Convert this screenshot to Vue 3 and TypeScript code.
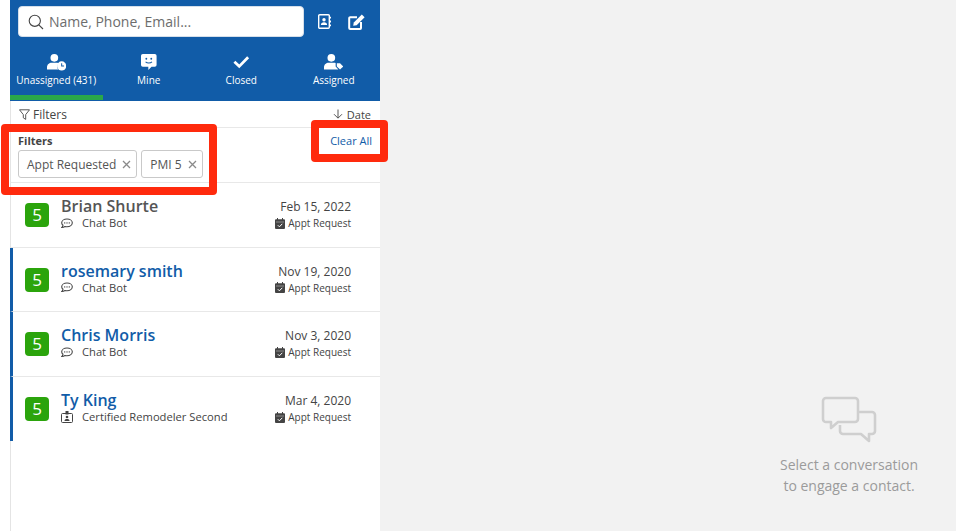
<script setup lang="ts">
interface Contact {
  name: string;
  source: string;
  icon: 'chat' | 'badge';
  date: string;
  unread: boolean;
}

const tabs = [
  { key: 'unassigned', label: 'Unassigned (431)' },
  { key: 'mine', label: 'Mine' },
  { key: 'closed', label: 'Closed' },
  { key: 'assigned', label: 'Assigned' },
];

const contacts: Contact[] = [
  { name: 'Brian Shurte', source: 'Chat Bot', icon: 'chat', date: 'Feb 15, 2022', unread: false },
  { name: 'rosemary smith', source: 'Chat Bot', icon: 'chat', date: 'Nov 19, 2020', unread: true },
  { name: 'Chris Morris', source: 'Chat Bot', icon: 'chat', date: 'Nov 3, 2020', unread: true },
  { name: 'Ty King', source: 'Certified Remodeler Second', icon: 'badge', date: 'Mar 4, 2020', unread: true },
];

const chips = ['Appt Requested', 'PMI 5'];
</script>

<template>
  <div class="page">
    <aside class="sidebar">
      <header class="head">
        <div class="search-row">
          <div class="search">
            <svg class="search__icon" width="16" height="16" viewBox="0 0 16 16" fill="none" stroke="#444" stroke-width="1.1">
              <circle cx="6.800" cy="6.800" r="5.600" />
              <path d="M10.800 10.800 15 15" />
            </svg>
            <span class="search__text">Name, Phone, Email...</span>
          </div>
          <svg class="head-icon" width="13" height="15" viewBox="0 0 13 15">
            <path fill="none" stroke="#fff" stroke-width="1.400" d="M1.700.800h8.600a1 1 0 0 1 1 1v11.400a1 1 0 0 1-1 1H1.700a1 1 0 0 1-1-1V1.800a1 1 0 0 1 1-1z" />
            <path fill="#fff" d="M11.500 2.800H13v1.800h-1.500zM11.500 6.600H13v1.800h-1.500zM11.500 10.400H13v1.800h-1.500z" />
            <circle fill="#fff" cx="6" cy="5.800" r="1.700" />
            <path fill="#fff" d="M2.900 11c0-2 1.300-2.800 3.100-2.800s3.100.8 3.100 2.800z" />
          </svg>
          <svg class="head-icon" width="17" height="16" viewBox="0 0 17 16">
            <path fill="none" stroke="#fff" stroke-width="2" d="M9 3.200H2.200a1 1 0 0 0-1 1V14a1 1 0 0 0 1 1H12a1 1 0 0 0 1-1V8" />
            <path fill="#fff" d="M13.800.4 16.600 3.200 8.600 11.200l-3.400.6.600-3.400z" />
          </svg>
        </div>
        <nav class="tabs">
          <div v-for="(tab, i) in tabs" :key="tab.key" class="tab" :class="{ 'tab--active': i === 0 }">
            <svg v-if="tab.key === 'unassigned'" viewBox="0 0 21 18">
              <circle fill="#fff" cx="8" cy="4.200" r="4.200" />
              <path fill="#fff" d="M0 17v-2.500C0 11.500 2.500 9.600 5 9.600h6c.8 0 1.500.2 2 .5a5.500 5.500 0 0 0-.800 6.900z" />
              <circle fill="#fff" cx="16" cy="13" r="5" />
              <path fill="none" stroke="#115ca8" stroke-width="1.100" d="M16 10v3.200h2.600" />
            </svg>
            <svg v-else-if="tab.key === 'mine'" viewBox="0 0 17 18">
              <path fill="#fff" d="M2 0h13a2 2 0 0 1 2 2v10a2 2 0 0 1-2 2h-3.500L8 17.500V14H2a2 2 0 0 1-2-2V2a2 2 0 0 1 2-2z" />
              <circle fill="#115ca8" cx="5.800" cy="5.200" r="1" />
              <circle fill="#115ca8" cx="11.200" cy="5.200" r="1" />
              <path fill="none" stroke="#115ca8" stroke-width="1.100" d="M5 8.500c1.800 1.700 5.200 1.700 7 0" />
            </svg>
            <svg v-else-if="tab.key === 'closed'" viewBox="0 0 18 18">
              <path fill="none" stroke="#fff" stroke-width="3" d="M1.500 8.500 6.800 13.500 16.500 3.500" />
            </svg>
            <svg v-else viewBox="0 0 21 18">
              <circle fill="#fff" cx="8" cy="4.200" r="4.200" />
              <path fill="#fff" d="M0 17v-2.500C0 11.500 2.500 9.600 5 9.600h6c.6 0 1.200.1 1.700.3v3.700l3 3.400z" />
              <path fill="#fff" d="M14 10h3.500l3.500 3.500-3.500 3.500-3.500-3.500z" />
            </svg>
            <span class="tab__label">{{ tab.label }}</span>
          </div>
        </nav>
      </header>

      <div class="toolbar">
        <span class="toolbar__filters">
          <svg width="11" height="11" viewBox="0 0 11 11" fill="none" stroke="#444" stroke-width=".9">
            <path d="M.5.800h10L6.700 5.600v4.800L4.300 8.800V5.600z" />
          </svg>
          Filters
        </span>
        <span class="toolbar__sort">
          <svg width="10" height="10" viewBox="0 0 10 10" fill="none" stroke="#444" stroke-width=".9">
            <path d="M5 .5v8.500M1 5.200 5 9.200 9 5.200" />
          </svg>
          Date
        </span>
      </div>

      <section class="filters">
        <div class="filters__main">
          <div class="filters__title">Filters</div>
          <div class="chips">
            <span v-for="chip in chips" :key="chip" class="chip">
              {{ chip }}
              <svg width="9" height="9" viewBox="0 0 9 9" stroke="#8a8a8a" stroke-width="1.300">
                <path d="M1 1 8 8M8 1 1 8" />
              </svg>
            </span>
          </div>
        </div>
        <a class="filters__clear">Clear All</a>
        <div class="mark mark--filters"></div>
        <div class="mark mark--clear"></div>
      </section>

      <ul class="list">
        <li v-for="c in contacts" :key="c.name" class="row" :class="{ 'row--unread': c.unread }">
          <div class="score">5</div>
          <div class="row__main">
            <div class="row__name">{{ c.name }}</div>
            <div class="row__source">
              <svg v-if="c.icon === 'chat'" width="12" height="11" viewBox="0 0 12 11">
                <path fill="none" stroke="#444" stroke-width="1.100" d="M6 1c-3 0-5.300 1.700-5.300 3.800 0 1 .5 1.900 1.300 2.500-.1.900-.6 1.700-1.100 2.200 1.200 0 2.400-.5 3.100-1 .6.100 1.300.2 2 .2 3 0 5.300-1.800 5.300-3.900S9 1 6 1z" />
                <circle fill="#444" cx="3.700" cy="4.900" r=".7" />
                <circle fill="#444" cx="6" cy="4.900" r=".7" />
                <circle fill="#444" cx="8.300" cy="4.900" r=".7" />
              </svg>
              <svg v-else width="12" height="12" viewBox="0 0 12 12">
                <rect fill="none" stroke="#444" stroke-width="1" x=".5" y="2.500" width="11" height="9" rx="1" />
                <rect fill="#444" x="4.500" y="0" width="3" height="3.500" />
                <circle fill="#444" cx="6" cy="6" r="1.300" />
                <path fill="#444" d="M3.500 10c0-1.500 1-2 2.500-2s2.500.5 2.500 2z" />
              </svg>
              <span>{{ c.source }}</span>
            </div>
          </div>
          <div class="row__side">
            <div class="row__date">{{ c.date }}</div>
            <div class="row__type">
              <svg width="10" height="11" viewBox="0 0 10 11">
                <path fill="#444" d="M2 0h1v1.200h4V0h1v1.200h1a1 1 0 0 1 1 1V10a1 1 0 0 1-1 1H1a1 1 0 0 1-1-1V2.200a1 1 0 0 1 1-1h1z" />
                <path fill="#fff" d="M1 3.800h8v.4H1z" />
                <path fill="none" stroke="#fff" stroke-width="1" d="M2.800 7.200 4.400 8.800 7.300 5.800" />
              </svg>
              Appt Request
            </div>
          </div>
        </li>
      </ul>
    </aside>

    <main class="empty">
      <svg width="56" height="50" viewBox="0 0 56 50" fill="none" stroke="#cfcfcf" stroke-width="2.600" stroke-linejoin="round">
        <path d="M5 3h29a3 3 0 0 1 3 3v18a3 3 0 0 1-3 3H17l-7 6v-6H5a3 3 0 0 1-3-3V6a3 3 0 0 1 3-3z" />
        <path d="M37 17h14a3 3 0 0 1 3 3v16a3 3 0 0 1-3 3h-3v7l-8-7H22a3 3 0 0 1-3-3v-6" />
      </svg>
      <p class="empty__text">Select a conversation<br />to engage a contact.</p>
    </main>
  </div>
</template>

<style>
html,
body {
  margin: 0;
  background: #fff;
}
</style>

<style scoped>
.page {
  display: flex;
  width: 956px;
  height: 531px;
  overflow: hidden;
  padding-left: 10px;
  box-sizing: border-box;
  font-family: 'Open Sans', 'Noto Sans', sans-serif;
  color: #444;
}

.sidebar {
  width: 370px;
  flex-shrink: 0;
  box-sizing: border-box;
  border-left: 1px solid #e4e4e4;
  background: #fff;
}

.head {
  margin-left: -1px;
  height: 101px;
  background: #115ca8;
}

.search-row {
  display: flex;
  align-items: center;
  padding: 6px 0 0 8px;
}

.search {
  display: flex;
  align-items: center;
  width: 286px;
  height: 31px;
  box-sizing: border-box;
  padding-left: 9px;
  background: #fff;
  border-radius: 4px;
  border: 1px solid #d5dfea;
}

.search__text {
  margin-left: 5px;
  font-size: 14px;
  color: #6d6d6d;
}

.head-icon {
  margin-left: 14px;
}

.head-icon + .head-icon {
  margin-left: 17px;
}

.tabs {
  display: flex;
  margin-top: 9px;
}

.tab {
  width: 92.500px;
  height: 54px;
  box-sizing: border-box;
  padding-top: 8px;
  display: flex;
  flex-direction: column;
  align-items: center;
  color: #fff;
}

.tab--active {
  border-bottom: 5px solid #2aa84a;
}

.tab svg {
  height: 16.500px;
}

.tab__label {
  margin-top: 1.500px;
  font-size: 10px;
  line-height: 16px;
  white-space: nowrap;
}

.toolbar {
  display: flex;
  justify-content: space-between;
  align-items: center;
  height: 27px;
  padding: 0 9px 0 8px;
  border-bottom: 1px solid #e8e8e8;
  box-sizing: border-box;
  font-size: 12px;
}

.toolbar__filters {
  display: flex;
  align-items: center;
  gap: 3px;
}

.toolbar__sort {
  display: flex;
  align-items: center;
  gap: 4px;
  font-size: 11px;
}

.filters {
  position: relative;
  display: flex;
  justify-content: space-between;
  height: 55px;
  box-sizing: border-box;
  padding: 5px 8px 0 7px;
  border-bottom: 1px solid #e8e8e8;
}

.filters__title {
  font-size: 11px;
  font-weight: 700;
  line-height: 15px;
}

.chips {
  display: flex;
  gap: 4px;
  margin-top: 2px;
}

.chip {
  display: flex;
  align-items: center;
  gap: 6px;
  height: 28px;
  box-sizing: border-box;
  padding: 0 5px 0 8px;
  border: 1px solid #c9c9c9;
  border-radius: 3px;
  font-size: 12px;
  color: #555;
}

.filters__clear {
  font-size: 11px;
  line-height: 15px;
  color: #115ca8;
}

.mark {
  position: absolute;
  border: 8px solid #ff2a0d;
  border-radius: 4px;
  box-sizing: border-box;
  pointer-events: none;
}

.mark--filters {
  left: -10px;
  top: -4px;
  width: 216px;
  height: 71px;
}

.mark--clear {
  left: 300px;
  top: -8px;
  width: 77px;
  height: 42px;
}

.list {
  list-style: none;
  margin: 0;
  padding: 0;
}

.row {
  display: flex;
  align-items: center;
  height: 65px;
  box-sizing: border-box;
  padding: 0 29px 0 14px;
  border-bottom: 1px solid #e8e8e8;
}

.row:nth-child(even) {
  height: 64px;
}

.row:last-child {
  border-bottom: none;
}

.row--unread {
  margin-left: -1px;
  border-left: 3px solid #115ca8;
  padding-left: 12px;
}

.score {
  width: 24px;
  height: 24px;
  flex-shrink: 0;
  border-radius: 4px;
  background: #2ba40c;
  color: #fff;
  font-size: 17px;
  line-height: 24px;
  text-align: center;
}

.row__main {
  flex: 1;
  margin-left: 12px;
  margin-top: -4px;
}

.row__name {
  font-size: 16px;
  font-weight: 600;
  line-height: 20px;
  color: #555;
}

.row--unread .row__name {
  color: #115ca8;
}

.row__source {
  display: flex;
  align-items: center;
  gap: 9px;
  font-size: 11.200px;
  line-height: 14px;
}

.row__side {
  margin-top: -4px;
  text-align: right;
}

.row__date {
  padding-top: 1px;
  font-size: 12px;
  line-height: 19px;
}

.row__type {
  display: flex;
  align-items: center;
  justify-content: flex-end;
  gap: 3px;
  font-size: 10px;
  line-height: 14px;
}

.empty {
  flex: 1;
  box-sizing: border-box;
  padding: 395px 38px 0 0;
  background: #f2f2f2;
  display: flex;
  flex-direction: column;
  align-items: flex-end;
}

.empty svg {
  margin-right: 41px;
}

.empty__text {
  margin: 9px 0 0;
  text-align: center;
  font-size: 14px;
  line-height: 21px;
  color: #9b9b9b;
}
</style>
